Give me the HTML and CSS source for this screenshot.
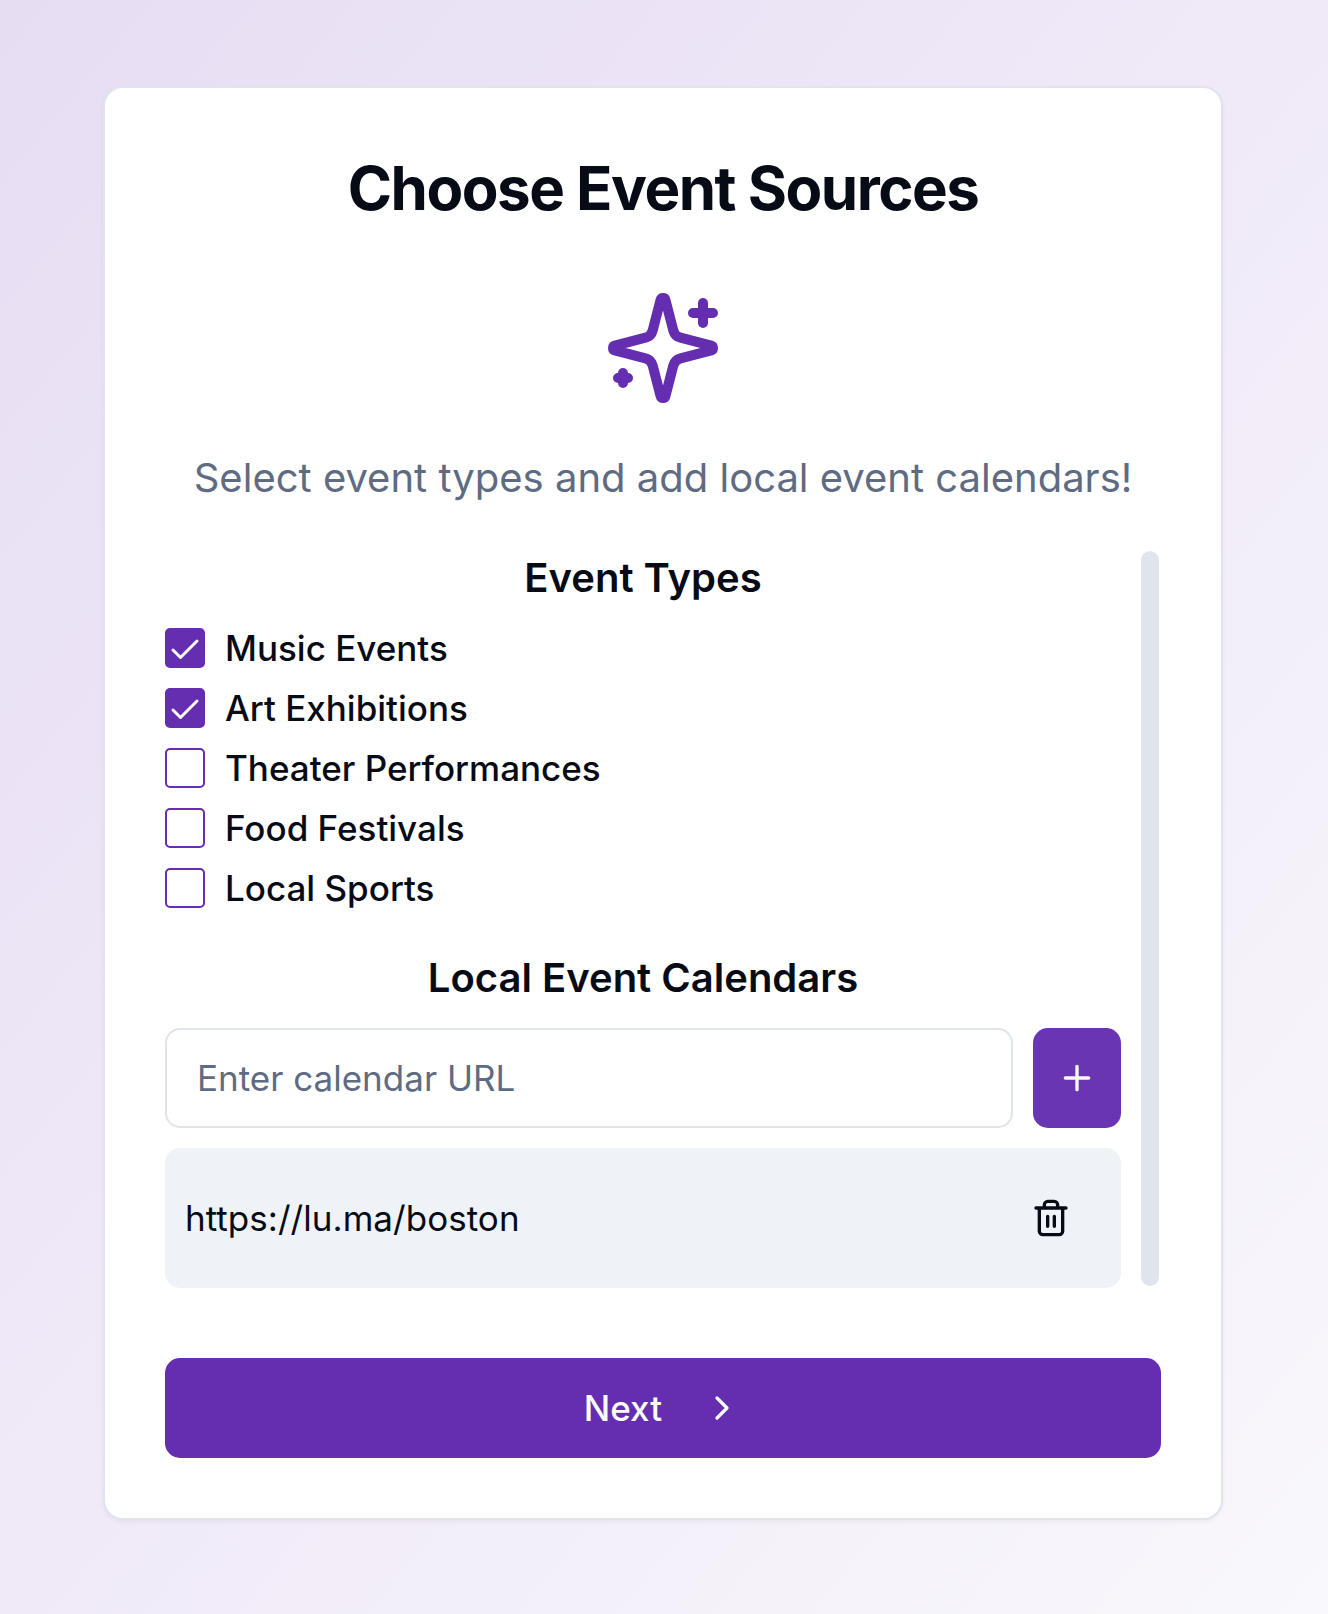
FILE: index.html
```html
<!DOCTYPE html>
<html lang="en">
<head>
<meta charset="utf-8">
<title>Choose Event Sources</title>
<link rel="stylesheet" href="styles.css">
</head>
<body>
<main class="card">
  <h1 class="title">Choose Event Sources</h1>
  <svg class="sparkles" viewBox="0 0 24 24"><path d="M9.937 15.5A2 2 0 0 0 8.5 14.063l-6.135-1.582a.5.5 0 0 1 0-.962L8.5 9.936A2 2 0 0 0 9.937 8.5l1.582-6.135a.5.5 0 0 1 .963 0L14.063 8.5A2 2 0 0 0 15.5 9.937l6.135 1.581a.5.5 0 0 1 0 .964L15.5 14.063a2 2 0 0 0-1.437 1.437l-1.582 6.135a.5.5 0 0 1-.963 0z"/><path d="M20 3v4M22 5h-4M4 17v2M5 18H3"/></svg>
  <p class="description">Select event types and add local event calendars!</p>
  <div class="scroll-area">
    <div class="content">
      <section class="group">
        <h2 class="heading">Event Types</h2>
        <label class="option"><span class="box checked"><svg viewBox="0 0 24 24"><path d="M20 6 9 17l-5-5"/></svg></span>Music Events</label>
        <label class="option"><span class="box checked"><svg viewBox="0 0 24 24"><path d="M20 6 9 17l-5-5"/></svg></span>Art Exhibitions</label>
        <label class="option"><span class="box"></span>Theater Performances</label>
        <label class="option"><span class="box"></span>Food Festivals</label>
        <label class="option"><span class="box"></span>Local Sports</label>
      </section>
      <section class="group">
        <h2 class="heading">Local Event Calendars</h2>
        <div class="add-row">
          <input class="url-input" type="text" placeholder="Enter calendar URL">
          <button class="add-button" aria-label="Add calendar"><svg class="icon" viewBox="0 0 24 24"><path d="M5 12h14M12 5v14"/></svg></button>
        </div>
        <div class="calendar">
          <span>https://lu.ma/boston</span>
          <button class="remove-button" aria-label="Remove calendar"><svg class="icon" viewBox="0 0 24 24"><path d="M3 6h18M19 6v14c0 1-1 2-2 2H7c-1 0-2-1-2-2V6M8 6V4c0-1 1-2 2-2h4c1 0 2 1 2 2v2M10 11v6M14 11v6"/></svg></button>
        </div>
      </section>
    </div>
    <div class="scrollbar"></div>
  </div>
  <button class="next-button">Next<svg class="icon" viewBox="0 0 24 24"><path d="m9 18 6-6-6-6"/></svg></button>
</main>
</body>
</html>
```
FILE: styles.css
```css
* { box-sizing: border-box; }

body {
  margin: 0;
  min-height: 1614px;
  padding: 86px 105px 94px 103px;
  background: linear-gradient(to bottom right, #e7ddf3, #f0eaf8 50%, #f9f8fc);
  font-family: Inter, "Liberation Sans", sans-serif;
  font-size: 35px;
  line-height: 50px;
  color: #070b16;
}

h1, h2, p { margin: 0; }

svg {
  display: block;
  flex: none;
  fill: none;
  stroke: currentColor;
  stroke-width: 2;
  stroke-linecap: round;
  stroke-linejoin: round;
}

button {
  display: flex;
  align-items: center;
  justify-content: center;
  padding: 0;
  border: 0;
  border-radius: 15px;
  font: inherit;
  color: #f8fafc;
}

.card {
  display: flex;
  flex-direction: column;
  height: 1434px;
  padding: 60px;
  border: 2px solid #dfe4ed;
  border-radius: 20px;
  background: #fff;
  box-shadow: 0 2px 4px rgb(0 0 0 / 5%);
}

.title {
  font-size: 60px;
  font-weight: 700;
  line-height: 80px;
  letter-spacing: -0.025em;
  text-align: center;
}

.sparkles {
  width: 120px;
  height: 120px;
  margin: 60px auto 40px;
  color: #652db0;
}

.description {
  font-size: 40px;
  line-height: 60px;
  text-align: center;
  white-space: nowrap;
  color: #5e6b82;
}

.scroll-area {
  display: flex;
  gap: 20px;
  height: 740px;
  margin: 40px 0 70px;
}

.content {
  display: flex;
  flex-direction: column;
  gap: 40px;
  width: 956px;
}

.group {
  display: flex;
  flex-direction: column;
  gap: 20px;
}

.heading {
  font-size: 40px;
  font-weight: 600;
  line-height: 60px;
  text-align: center;
}

.option {
  display: flex;
  align-items: center;
  gap: 20px;
  height: 40px;
  font-weight: 500;
}

.box {
  width: 40px;
  height: 40px;
  border: 2px solid #652db0;
  border-radius: 5px;
}

.box.checked { background: #652db0; color: #f8fafc; }

.box svg { width: 36px; height: 40px; }

.add-row { display: flex; gap: 20px; }

.url-input {
  flex: 1;
  min-width: 0;
  height: 100px;
  padding: 0 30px;
  border: 2px solid #dfe4ed;
  border-radius: 15px;
  background: #fff;
  font: inherit;
}

.url-input::placeholder { color: #5e6b82; opacity: 1; }

.add-button { width: 88px; height: 100px; background: #6a35b3; }

.icon { width: 40px; height: 40px; }

.calendar {
  display: flex;
  align-items: center;
  justify-content: space-between;
  height: 140px;
  padding: 20px;
  border-radius: 15px;
  background: #eff3f8;
  letter-spacing: 0.04px;
}

.remove-button {
  width: 100px;
  height: 100px;
  background: transparent;
  color: #070b16;
}

.scrollbar {
  width: 18px;
  margin: 3px 0 2px;
  border-radius: 9px;
  background: #dfe4ed;
}

.next-button {
  gap: 40px;
  height: 100px;
  background: #652db0;
  font-weight: 500;
}
```
